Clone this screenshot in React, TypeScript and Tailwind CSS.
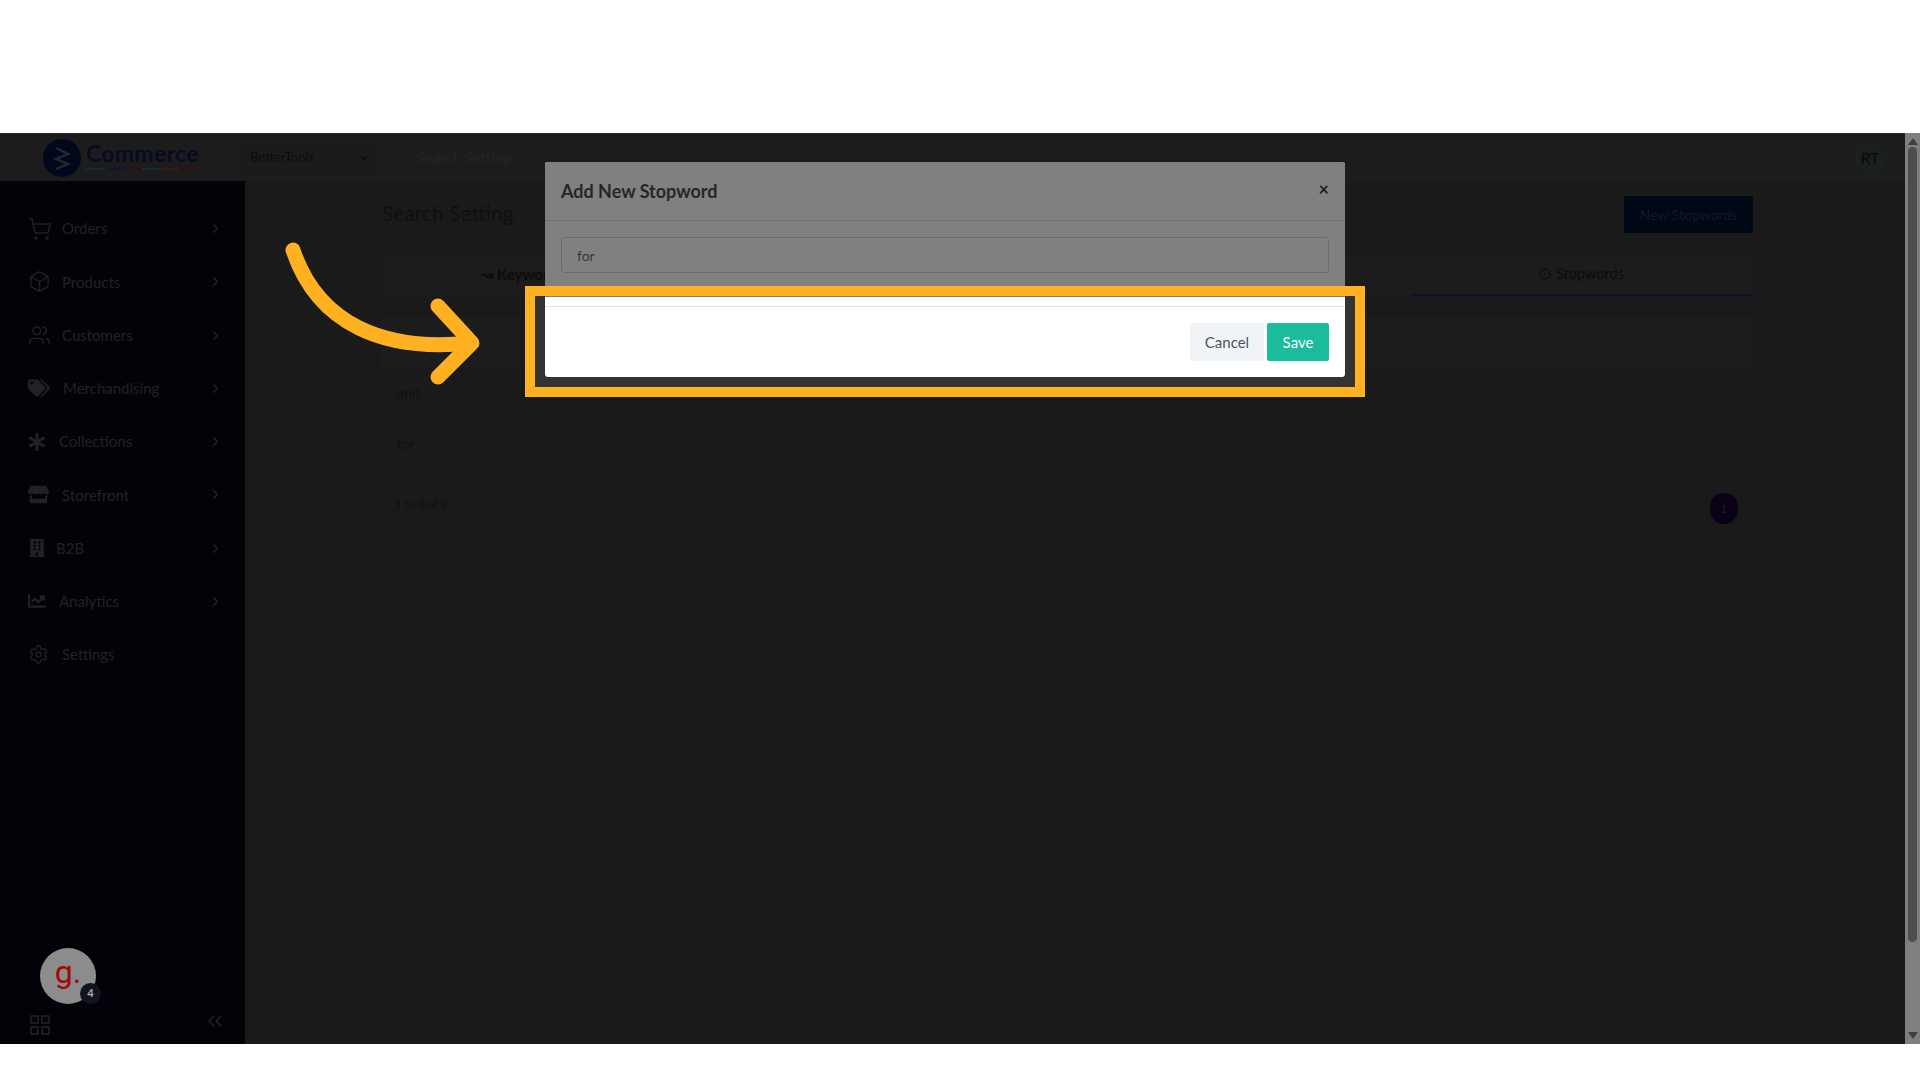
import React from 'react';
import { ShoppingCart, Box, Users, Settings, ChevronRight, ChevronDown, ChevronsLeft, CircleDot } from 'lucide-react';
import { FaTags, FaAsterisk, FaStore, FaBuilding, FaChartLine } from 'react-icons/fa';

const menu = [
  { label: 'Orders', icon: <ShoppingCart size={24} strokeWidth={1.5} />, text: 'ml-[10px]', arrow: true },
  { label: 'Products', icon: <Box size={23} strokeWidth={1.5} />, text: 'ml-[11px]', arrow: true },
  { label: 'Customers', icon: <Users size={23} strokeWidth={1.5} />, text: 'ml-[11px]', arrow: true },
  { label: 'Merchandising', icon: <FaTags size={22} />, text: 'ml-[13px]', arrow: true },
  { label: 'Collections', icon: <FaAsterisk size={18} />, text: 'ml-[13px]', arrow: true },
  { label: 'Storefront', icon: <FaStore size={21} />, text: 'ml-[13px]', arrow: true },
  { label: 'B2B', icon: <FaBuilding size={18} />, text: 'ml-[10px]', arrow: true },
  { label: 'Analytics', icon: <FaChartLine size={18} />, text: 'ml-[13px]', arrow: true },
  { label: 'Settings', icon: <Settings size={21} strokeWidth={1.6} />, text: 'ml-[13px]', arrow: false },
];

export default function App() {
  return (
    <div className="relative w-[1920px] h-[1080px] overflow-hidden bg-white font-['Lato',sans-serif]">
      <div className="h-[133px]" />

      <div className="flex h-[911px]">
        <div className="flex flex-col w-[1905px] bg-[#1a1a1a]">
          {/* Topbar */}
          <div className="flex items-center h-[48px] bg-[#1c1c1c] border-t border-[#262626]">
            <div className="flex items-center w-[240px] pl-[43px]">
              <svg width="38" height="38" viewBox="0 0 38 38">
                <circle cx="19" cy="19" r="19" fill="#02081c" />
                <path d="M13 9l12 6-12 5 12 5-12 5" fill="none" stroke="#1f2733" strokeWidth="2.5" />
              </svg>
              <div className="ml-[5px] w-[113px] -mt-[4px]">
                <div className="text-[23px] leading-[24px] font-bold text-[#060b22] tracking-[0.3px]">Commerce</div>
                <div className="flex h-[2px] mt-[3px]">
                  <div className="flex-1 bg-[#0f3038]" />
                  <div className="flex-1 bg-[#10143a]" />
                  <div className="flex-1 bg-[#3a0a1c]" />
                  <div className="flex-1 bg-[#0f3038]" />
                  <div className="flex-1 bg-[#3a1a0a]" />
                  <div className="flex-1 bg-[#3a0a1c]" />
                </div>
              </div>
            </div>
            <div className="flex items-center justify-between w-[140px] h-[36px] pl-[10px] pr-[10px] bg-[#1b1b1b] text-[13px] text-[#0c0c0c]">
              <span>BetterTools</span>
              <ChevronDown size={12} strokeWidth={3} />
            </div>
            <ChevronRight size={12} className="ml-[16px] text-[#262626]" />
            <span className="ml-[9px] text-[15px] text-[#242424]">Search Setting</span>
            <div className="ml-auto mr-[18px] flex items-center justify-center w-[34px] h-[34px] rounded-full bg-[#1a1f1f] text-[16px] text-[#080808]">RT</div>
          </div>

          <div className="flex flex-1 min-h-0">
            {/* Sidebar */}
            <div className="flex flex-col w-[245px] bg-[#020208] pt-[21px] pb-[9px] text-[#222222]">
              {menu.map((m) => (
                <div key={m.label} className="flex items-center h-[53.25px] pl-[28px] pr-[22px]">
                  <div className="flex items-center justify-start shrink-0">{m.icon}</div>
                  <span className={`${m.text} text-[15px]`}>{m.label}</span>
                  {m.arrow && <ChevronRight size={15} strokeWidth={2.5} className="ml-auto" />}
                </div>
              ))}
              <div className="mt-auto relative ml-[40px] w-[56px] h-[56px] rounded-full bg-[#8c8c8c] flex items-center justify-center">
                <span className="font-['Roboto',sans-serif] text-[32px] leading-none text-[#a00a0a] mb-[8px]">g.</span>
                <div className="absolute -right-[5px] bottom-0 flex items-center justify-center w-[21px] h-[21px] rounded-full bg-[#101520] text-[11px] font-bold text-[#b0b0b0]">4</div>
              </div>
              <div className="flex justify-between mt-[11px] pl-[30px] pr-[18px]">
                <svg width="20" height="20" viewBox="0 0 20 20" fill="none" stroke="#222222" strokeWidth="1.6">
                  <rect x="1" y="1" width="7" height="7" />
                  <rect x="12" y="1" width="7" height="7" />
                  <rect x="1" y="12" width="7" height="7" />
                  <rect x="12" y="12" width="7" height="7" />
                </svg>
                <ChevronsLeft size={24} strokeWidth={1.5} className="-mt-[6px]" />
              </div>
            </div>

            {/* Main */}
            <div className="flex-1 pl-[137px] pr-[152px] pt-[15px] text-[#111111]">
              <div className="flex items-center justify-between h-[37px]">
                <div className="text-[21px] text-[#101010] mb-[4px]">Search Setting</div>
                <div className="flex items-center justify-center w-[129px] h-[37px] rounded-[2px] bg-[#000815] text-[14px] text-[#0f1a2a]">New Stopwords</div>
              </div>

              <div className="flex h-[41px] mt-[22px] pb-[2px] bg-[#1c1c1c] text-[14px] text-[#0c0c0c]">
                <div className="flex items-center flex-1 pl-[99px] gap-[3px] text-[15px] font-bold">
                  <span>↝</span>
                  <span>Keywords</span>
                </div>
                <div className="flex items-center justify-center gap-[5px] w-[343px] -mb-[2px] pb-[2px] border-b-2 border-[#0a1030]">
                  <CircleDot size={12} />
                  <span className="text-[14.5px]">Stopwords</span>
                </div>
              </div>

              <div className="mt-[21px] h-[223px] border border-[#1e1e1e] rounded-[2px] text-[#101010]">
                <div className="h-[49px] bg-[#1b1d1c] border-b border-[#1e1e1e]" />
                <div className="flex items-center h-[51px] pl-[14px] text-[14px] border-b border-[#1e1e1e]">and</div>
                <div className="flex items-center h-[51px] pl-[14px] text-[14px]">for</div>
                <div className="flex items-center justify-between pl-[12px] pr-[14px] mt-[24px]">
                  <span className="text-[11.5px] mb-[10px]">1 to 2 of 2</span>
                  <div className="flex items-center justify-center w-[28px] h-[31px] rounded-full bg-[#0a0018] text-[12px] text-[#1a1a2a]">1</div>
                </div>
              </div>
            </div>
          </div>
        </div>

        {/* Browser scrollbar */}
        <div className="flex flex-col items-center w-[15px] bg-[#7f7f7f]">
          <div className="mt-[5px] w-0 h-0 border-x-[5px] border-x-transparent border-b-[7px] border-b-[#404040]" />
          <div className="mt-[2px] w-[9px] h-[795px] rounded-full bg-[#4d4d4d]" />
          <div className="mt-auto mb-[5px] w-0 h-0 border-x-[5px] border-x-transparent border-t-[7px] border-t-[#404040]" />
        </div>
      </div>

      {/* Spotlight backing */}
      <div className="absolute left-[525px] top-[286px] w-[840px] h-[111px] bg-[#333333]" />

      {/* Modal */}
      <div className="absolute left-[545px] top-[162px] w-[800px] flex flex-col rounded-[3px] overflow-hidden bg-white">
        <div className="flex items-center justify-between h-[59px] pl-[16px] pr-[16px] bg-[#808080] border-b border-[#727272]">
          <span className="text-[18px] font-bold text-[#262626]">Add New Stopword</span>
          <span className="text-[18px] font-bold leading-none text-[#222222] mb-[4px]">×</span>
        </div>
        <div className="h-[76px] pt-[16px] px-[16px] bg-[#808080]">
          <div className="flex items-center h-[36px] pl-[15px] rounded-[3px] border border-[#6b6b6b] text-[14px] text-[#383838]">for</div>
        </div>
        <div className="h-[10px] bg-white border-b border-[#dde3ea]" />
        <div className="flex justify-end gap-[3px] h-[70px] pt-[16px] pr-[16px]">
          <div className="flex items-center justify-center w-[74px] h-[38px] rounded-[2px] bg-[#f1f4f7] text-[15px] text-[#4b5563]">Cancel</div>
          <div className="flex items-center justify-center w-[62px] h-[38px] rounded-[2px] bg-[#1abc9c] text-[15px] text-white">Save</div>
        </div>
      </div>

      {/* Highlight frame */}
      <div className="absolute left-[525px] top-[286px] w-[840px] h-[111px] border-[10px] border-[#ffb122]" />

      {/* Arrow */}
      <svg className="absolute left-[280px] top-[235px]" width="210" height="160" viewBox="280 235 210 160">
        <path d="M293 250C318 325 385 352 470 343" fill="none" stroke="#ffb122" strokeWidth="15" strokeLinecap="round" />
        <path d="M438 306L472 343L438 377" fill="none" stroke="#ffb122" strokeWidth="15" strokeLinecap="round" strokeLinejoin="round" />
      </svg>
    </div>
  );
}
